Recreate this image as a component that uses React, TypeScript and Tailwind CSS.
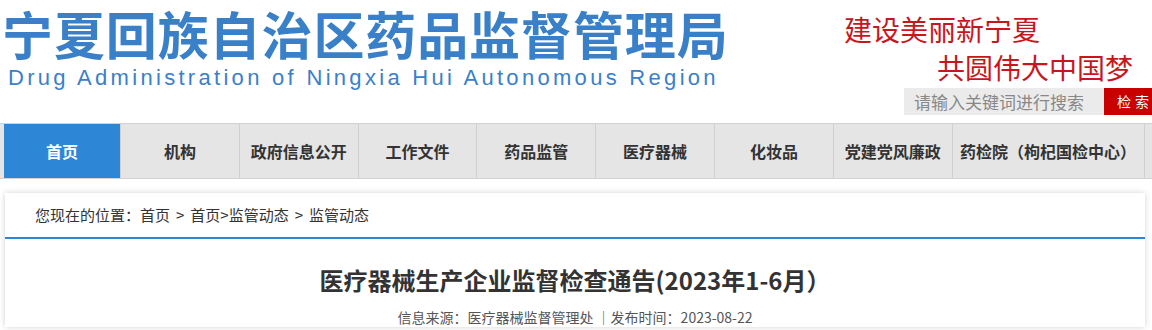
const navItems = ['首页', '机构', '政府信息公开', '工作文件', '药品监管', '医疗器械', '化妆品', '党建党风廉政'];

const cjk = { fontFamily: '"Noto Sans CJK SC", "Liberation Sans", sans-serif' };

export default function App() {
  return (
    <div className="h-[330px] w-[1152px] overflow-hidden bg-white" style={cjk}>
      {/* header */}
      <div className="flex h-[123px] justify-between">
        <div className="pl-[2px] pt-[1px]">
          <h1 className="whitespace-nowrap text-[51px] font-bold leading-[64px] tracking-[0.9px] text-[#3a80c9]">
            宁夏回族自治区药品监督管理局
          </h1>
          <p
            className="whitespace-nowrap pl-[6px] text-[22px] leading-[26px] tracking-[3.3px] text-[#3a80c9]"
            style={{ fontFamily: '"Liberation Sans", Arial, sans-serif' }}
          >
            Drug Administration of Ningxia Hui Autonomous Region
          </p>
        </div>
        <div className="flex flex-col items-end">
          <div className="mr-[112px] mt-[10px] whitespace-nowrap text-[28px] leading-[38px] text-[#c8161d]">建设美丽新宁夏</div>
          <div className="mr-[19px] whitespace-nowrap text-[28px] leading-[38px] text-[#c8161d]">共圆伟大中国梦</div>
          <div className="mt-[2px] flex h-[27px]">
            <div className="flex w-[200px] items-center bg-[#ebebeb] pl-[10px] text-[17px] text-[#888]">请输入关键词进行搜索</div>
            <div className="flex w-[48px] items-center overflow-hidden whitespace-nowrap bg-[#c80000] pl-[13px] text-[14px] tracking-[4px] text-white">
              检索
            </div>
          </div>
        </div>
      </div>

      {/* nav */}
      <div className="h-[56px] border-y border-[#d3d3d3] bg-[#e5e5e5] pl-[4px]">
        <div className="flex h-full">
          {navItems.map((item, i) => (
            <div
              key={item}
              className={
                i === 0
                  ? 'flex w-[117px] items-center justify-center border-r border-[#d0d0d0] bg-[#2d86d6] text-[16px] font-bold text-white'
                  : 'flex w-[118.8px] items-center justify-center whitespace-nowrap border-r border-[#d0d0d0] text-[16px] font-bold text-[#333]'
              }
            >
              {item}
            </div>
          ))}
          <div className="flex w-[192px] items-center justify-center whitespace-nowrap border-r border-[#d0d0d0] text-[16px] font-bold text-[#333]">
            药检院（枸杞国检中心）
          </div>
        </div>
      </div>

      {/* content */}
      <div className="px-[5px] pt-[14px]">
        <div className="w-[1140px] bg-white shadow-[0_0_6px_rgba(0,0,0,0.18)]">
          <div className="flex h-[46px] items-center whitespace-nowrap border-b-2 border-[#2d86d6] pl-[30px] text-[15px] text-[#333]">
            <span>您现在的位置：首页</span>
            <span className="mx-[6px]">&gt;</span>
            <span>首页&gt;监管动态</span>
            <span className="mx-[6px]">&gt;</span>
            <span>监管动态</span>
          </div>
          <div className="pt-[24px] text-center">
            <h2 className="text-[24px] font-bold leading-[34px] text-[#333]">医疗器械生产企业监督检查通告(2023年1-6月）</h2>
            <p className="mt-[10px] text-[14px] leading-[20px] text-[#555]">信息来源：医疗器械监督管理处 ｜发布时间：2023-08-22</p>
          </div>
        </div>
      </div>
    </div>
  );
}
